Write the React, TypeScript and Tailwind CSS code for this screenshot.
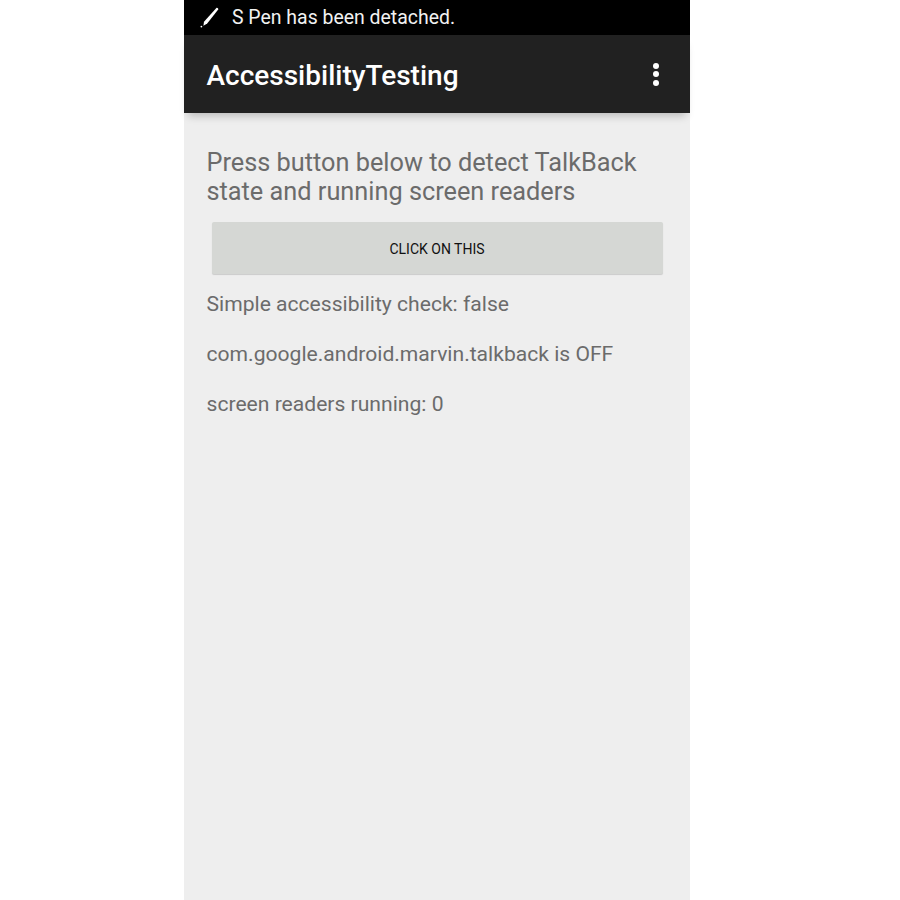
const App = () => {
  return (
    <div className="h-[900px] w-[900px] bg-white overflow-hidden font-['Roboto',sans-serif]">
      <div className="ml-[184px] flex h-[900px] w-[506px] flex-col bg-[#eeeeee]">
        {/* status bar */}
        <div className="relative z-10 flex h-[35px] shrink-0 items-center bg-black pl-[15px]">
          <svg width="21" height="22" viewBox="0 0 21 22" className="shrink-0">
            <path d="M17.6 0.8 C18.6 0.6 19.4 1.4 19.2 2.6 L8.2 16.6 L4.4 18.8 L5 14.8 Z" fill="#fff" />
            <circle cx="2.4" cy="19.6" r="0.9" fill="#fff" />
          </svg>
          <span className="ml-[12px] text-[19.45px] leading-[35px] text-[#f2f2f2]">S Pen has been detached.</span>
        </div>

        {/* action bar */}
        <div className="flex h-[78px] shrink-0 items-center justify-between bg-[#212121] pl-[22.5px] pr-[31px] shadow-[0_7px_8px_-4px_rgba(0,0,0,0.22)]">
          <span className="mt-[4px] text-[28px] font-medium leading-[34px] text-white">AccessibilityTesting</span>
          <div className="flex flex-col gap-[2.5px]">
            <div className="h-[6px] w-[6px] rounded-full bg-white" />
            <div className="h-[6px] w-[6px] rounded-full bg-white" />
            <div className="h-[6px] w-[6px] rounded-full bg-white" />
          </div>
        </div>

        {/* content */}
        <div className="flex flex-col pl-[22.5px] pr-[27px] pt-[35px]">
          <p className="text-[25.3px] leading-[29px] text-[#6b6b6b]">
            Press button below to detect TalkBack
            <br />
            state and running screen readers
          </p>
          <button className="ml-[5px] mt-[16px] flex h-[51.5px] w-[451px] items-center justify-center rounded-[2px] bg-[#d5d7d4] pt-[3px] text-[14px] font-normal text-[#111111] shadow-[0_1px_1px_rgba(0,0,0,0.15)]">
            CLICK ON THIS
          </button>
          <p className="mt-[15.5px] text-[21.1px] leading-[30px] text-[#6b6b6b]">Simple accessibility check: false</p>
          <p className="mt-[20px] text-[21.1px] leading-[30px] text-[#6b6b6b]">com.google.android.marvin.talkback is OFF</p>
          <p className="mt-[20px] text-[21.1px] leading-[30px] text-[#6b6b6b]">screen readers running: 0</p>
        </div>
      </div>
    </div>
  );
};

export default App;
